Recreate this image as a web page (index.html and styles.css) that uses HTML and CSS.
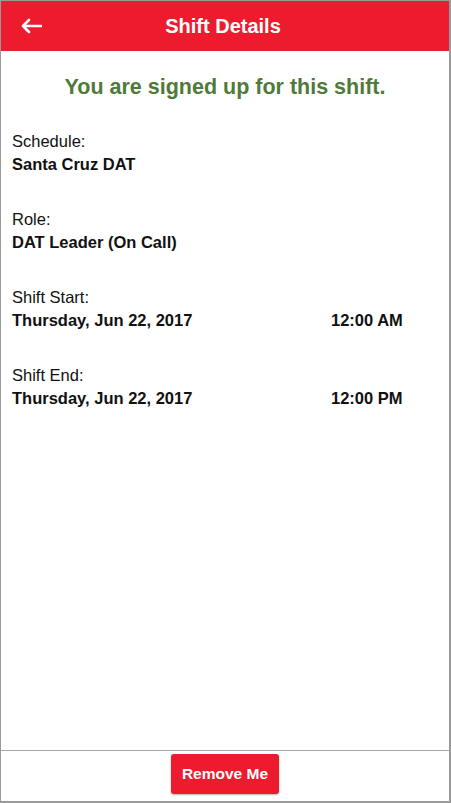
FILE: index.html
```html
<!DOCTYPE html>
<html lang="en">

<head>
    <meta charset="UTF-8">
    <meta name="viewport" content="width=device-width, initial-scale=1.0">
    <title>Shift Details</title>
    <link rel="stylesheet" href="styles.css">
</head>

<body>
    <div class="screen">
        <header class="topbar">
            <a class="back" href="#">
                <svg width="22" height="16" viewBox="0 0 22 16">
                    <path d="M21 8H3M9 2L3 8l6 6" fill="none" stroke="#fff" stroke-width="2.6" stroke-linecap="round" stroke-linejoin="round" />
                </svg>
            </a>
            <h1>Shift Details</h1>
        </header>

        <main class="content">
            <p class="notice">You are signed up for this shift.</p>

            <div class="field">
                <div class="label">Schedule:</div>
                <div class="value">Santa Cruz DAT</div>
            </div>

            <div class="field">
                <div class="label">Role:</div>
                <div class="value">DAT Leader (On Call)</div>
            </div>

            <div class="field">
                <div class="label">Shift Start:</div>
                <div class="value row">
                    <span>Thursday, Jun 22, 2017</span>
                    <span class="time">12:00 AM</span>
                </div>
            </div>

            <div class="field">
                <div class="label">Shift End:</div>
                <div class="value row">
                    <span>Thursday, Jun 22, 2017</span>
                    <span class="time">12:00 PM</span>
                </div>
            </div>
        </main>

        <footer class="actions">
            <button class="btn-remove">Remove Me</button>
        </footer>
    </div>
</body>

</html>
```

FILE: styles.css
```css
* {
    padding: 0;
    margin: 0;
    box-sizing: border-box;
}

body {
    font-family: "Liberation Sans", Arial, sans-serif;
    color: #111;
    background: #fff;
}

.screen {
    display: flex;
    flex-direction: column;
    width: 451px;
    height: 803px;
    border: 1px solid #9a9a9a;
    border-right-width: 2px;
    border-bottom-width: 2px;
}

.topbar {
    position: relative;
    display: flex;
    align-items: center;
    justify-content: center;
    height: 50px;
    background-color: #ec1b2d;
}

.topbar h1 {
    font-size: 20px;
    font-weight: bold;
    color: #fff;
    margin-left: -4px;
}

.back {
    position: absolute;
    left: 19px;
    top: 17px;
    display: flex;
}

.content {
    flex: 1;
    padding: 24px 0 0 11px;
}

.notice {
    font-size: 21.5px;
    line-height: 24px;
    font-weight: bold;
    color: #4f7a38;
    text-align: center;
    margin: 0 0 31px -11px;
}

.field {
    margin-bottom: 32px;
    font-size: 16.5px;
    line-height: 23px;
}

.value {
    font-weight: bold;
}

.row {
    display: grid;
    grid-template-columns: 319px auto;
}

.actions {
    display: flex;
    justify-content: center;
    padding: 3px 0 7px;
    border-top: 1px solid #a8a8a8;
}

.btn-remove {
    width: 108px;
    height: 40px;
    border: none;
    border-radius: 3px;
    background-color: #ec1b2d;
    box-shadow: 0 1px 2px rgba(0, 0, 0, 0.3);
    color: #fff;
    font: bold 15.5px "Liberation Sans", Arial, sans-serif;
}
```
